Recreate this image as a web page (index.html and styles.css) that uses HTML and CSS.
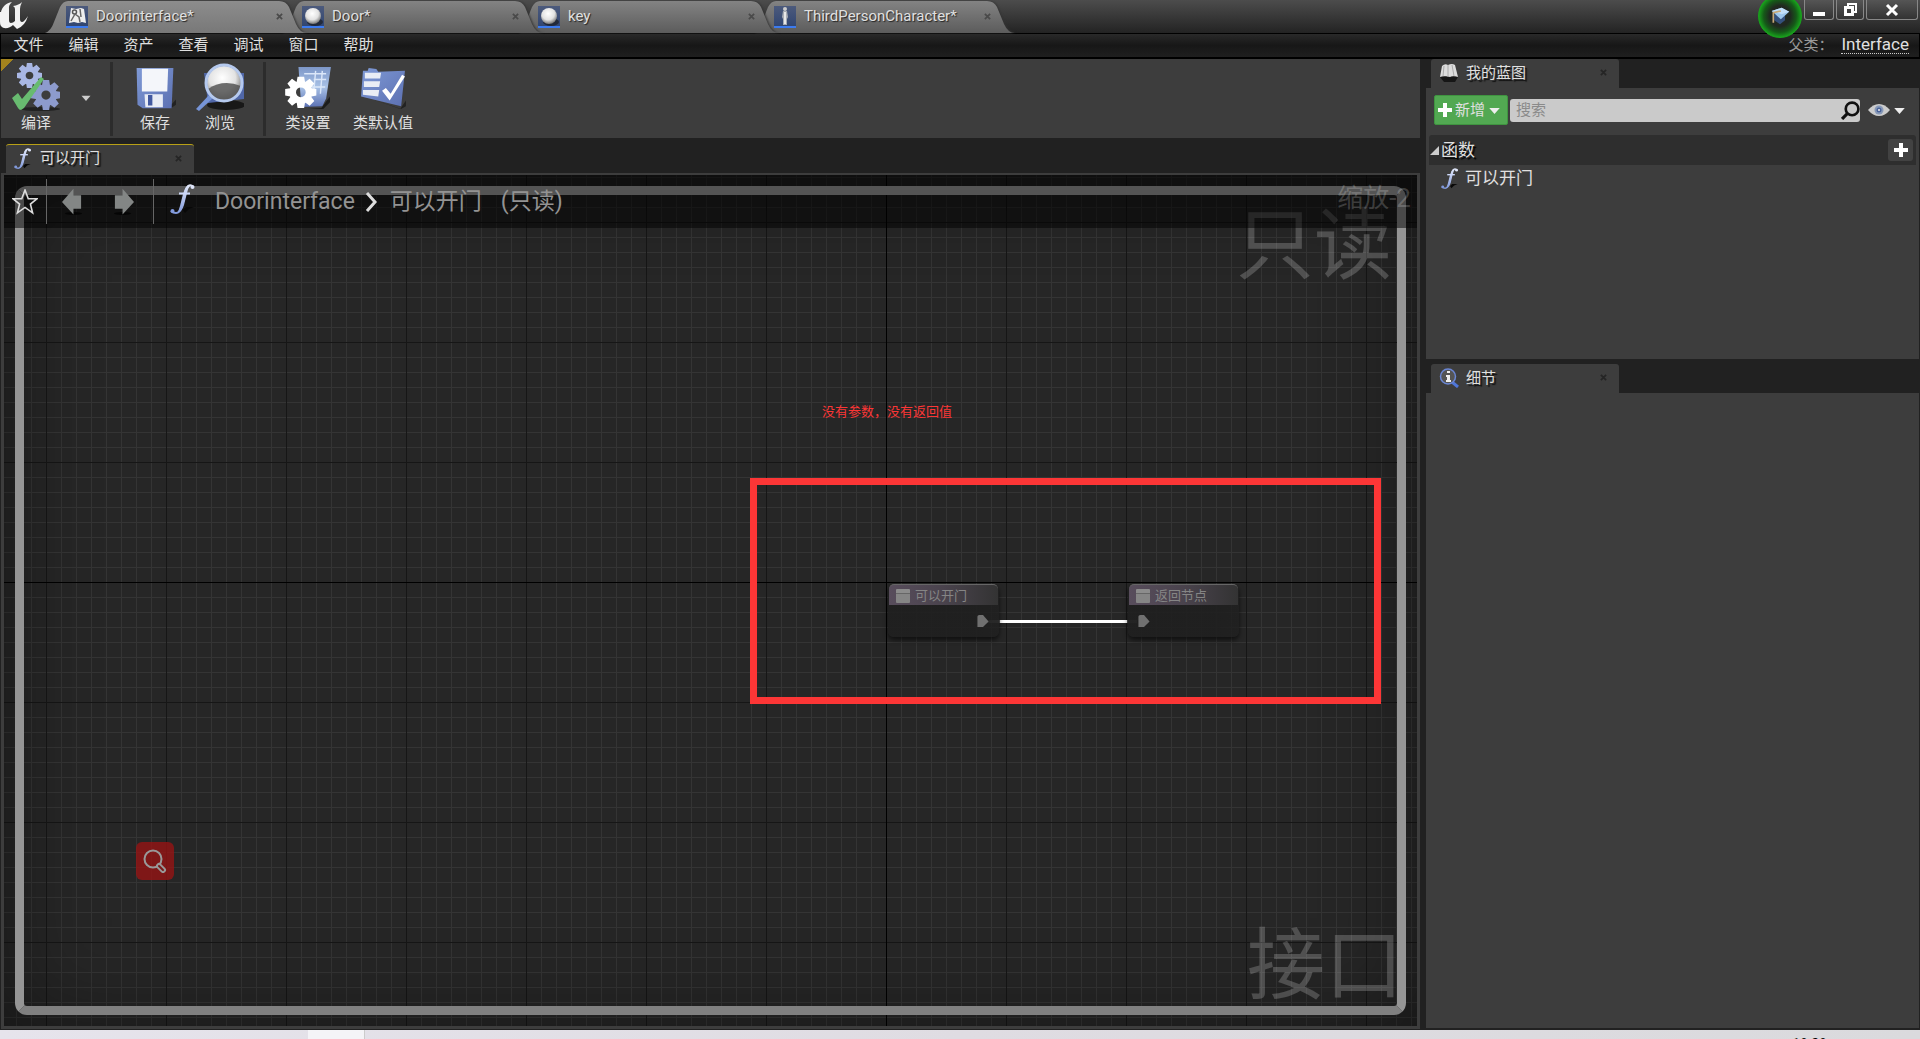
FILE: index.html
```html
<!DOCTYPE html>
<html lang="zh-CN">
<head>
<meta charset="utf-8">
<title>Doorinterface</title>
<link rel="stylesheet" href="styles.css">
</head>
<body>
<svg class="defs" aria-hidden="true">
  <defs>
    <linearGradient id="tabOn" x1="0" y1="0" x2="0" y2="1"><stop offset="0" stop-color="#8d8d8d"/><stop offset="1" stop-color="#787878"/></linearGradient>
    <linearGradient id="tabOff" x1="0" y1="0" x2="0" y2="1"><stop offset="0" stop-color="#838383"/><stop offset="1" stop-color="#5c5c5c"/></linearGradient>
    <linearGradient id="blue" x1="0" y1="0" x2="0" y2="1"><stop offset="0" stop-color="#7d97c8"/><stop offset=".5" stop-color="#a9c2e6"/><stop offset="1" stop-color="#5c72b4"/></linearGradient>
    <linearGradient id="steel" x1="0" y1="0" x2="1" y2="1"><stop offset="0" stop-color="#7f9ad6"/><stop offset="1" stop-color="#5c70b2"/></linearGradient>
    <linearGradient id="ink" gradientUnits="userSpaceOnUse" x1="0" y1="0" x2="0" y2="30"><stop offset="0" stop-color="#e4eafb"/><stop offset="1" stop-color="#7f98dc"/></linearGradient>
    <linearGradient id="tile" x1="0" y1="0" x2="0" y2="1"><stop offset="0" stop-color="#4c5a7c"/><stop offset="1" stop-color="#2f4470"/></linearGradient>
    <radialGradient id="ball" cx=".45" cy=".35" r=".65"><stop offset="0" stop-color="#fff"/><stop offset=".6" stop-color="#e2e2e2"/><stop offset="1" stop-color="#777"/></radialGradient>
    <symbol id="x" viewBox="0 0 8 8"><path d="M1 1l6 6M7 1L1 7" stroke="currentColor" stroke-width="2"/></symbol>
    <symbol id="caret" viewBox="0 0 12 8"><path d="M0 1h12L6 8z" fill="currentColor"/></symbol>
    <symbol id="gear" viewBox="-12 -12 24 24">
      <g fill="currentColor"><path id="teeth" d="M-2.500-12h5l.8 5h-6.600zM-2.500 12h5l.8-5h-6.600z"/><use href="#teeth" transform="rotate(45)"/><use href="#teeth" transform="rotate(90)"/><use href="#teeth" transform="rotate(135)"/></g>
      <circle r="6.200" fill="none" stroke="currentColor" stroke-width="5"/>
    </symbol>
    <symbol id="sphere" viewBox="0 0 22 22"><path fill="url(#tile)" d="M0 0h22v22H0z"/><ellipse cx="13" cy="16" rx="8" ry="4" fill="#161616" opacity=".6"/><circle cx="11" cy="10" r="8" fill="url(#ball)"/><path fill="#3c7bf0" d="M0 20h22v2H0z"/></symbol>
    <symbol id="arrow" viewBox="0 0 22 28"><ellipse cx="12" cy="26" rx="9" ry="1.500" fill="#050505"/><path d="M0 14L12 0v7h8v14h-8v6z" fill="#838685"/></symbol>
    <symbol id="entry" viewBox="0 0 12 14"><path d="M0 2q0-2 2-2h4l6 7-6 6H0z" fill="#707070"/></symbol>
    <symbol id="func" viewBox="0 0 26 30">
      <path d="M13 26l3-3h8l-5 2-4 4z" fill="#080808"/>
      <path d="M23 3Q21 0 18 2 16 4 15 9L12 22Q10 29 6 29 3 29 1 27" fill="none" stroke="url(#ink)" stroke-width="2"/>
      <path d="M16 3Q14 6 13 10L10 22Q9 26 7 29 12 28 14 21L17 9Q18 4 20 2 18 1 16 3z" fill="url(#ink)"/>
      <path d="M9 9.500h11" stroke="#cdd8f8" stroke-width="2"/>
      <circle cx="2.500" cy="27" r="2" fill="#8199dc"/><circle cx="22.500" cy="3" r="2" fill="#dfe6fa"/>
    </symbol>
  </defs>
</svg>

<header class="titlebar">
  <svg class="logo" viewBox="0 0 28 28" role="img" aria-label="Unreal"><path d="M1 11C2 6 6 2 12 1 9 4 9 5 9 8v11q0 3 2 3 2 0 4-2V8q0-2-2-3 6-1 9-4-2 4-2 7v10q0 3 2 3 2 0 6-6-3 10-11 13l-4-4c-3 3-9 5-12 1-1-1-1-3-1-6V9q-2-1-4 2z" fill="#f2f2f2"/></svg>
  <nav class="tabs">
    <div class="tab tab-1">
      <svg class="tab-shape" viewBox="0 0 262 32" preserveAspectRatio="none"><path d="M0 32Q6 30 9 21L15 6Q18 0 23 0H234Q241 0 244 6L251 23Q255 32 262 32z" fill="url(#tabOn)"/></svg>
      <svg class="thumb" viewBox="0 0 22 22"><path fill="url(#tile)" d="M0 0h22v22H0z"/><path fill="#eee" d="M5 2l5 1 5-1 3 1 2 14-4-1-4 1-4-1-5 1z"/><circle cx="8.500" cy="6" r="2" fill="none" stroke="#555" stroke-width="1.500"/><path d="M9 8l-4 7M9 8l4 3 1 5M14 3l1 8" fill="none" stroke="#666" stroke-width="1.500"/><path fill="#3c7bf0" d="M0 20h22v2H0z"/></svg>
      <a href="#" class="tab-name">Doorinterface*</a>
      <button class="close" aria-label="关闭"><svg><use href="#x"/></svg></button>
    </div>
    <div class="tab tab-2">
      <svg class="tab-shape" viewBox="0 0 262 32" preserveAspectRatio="none"><path d="M0 32Q6 30 9 21L15 6Q18 0 23 0H234Q241 0 244 6L251 23Q255 32 262 32z" fill="url(#tabOff)"/></svg>
      <svg class="thumb"><use href="#sphere"/></svg>
      <a href="#" class="tab-name">Door*</a>
      <button class="close" aria-label="关闭"><svg><use href="#x"/></svg></button>
    </div>
    <div class="tab tab-3">
      <svg class="tab-shape" viewBox="0 0 262 32" preserveAspectRatio="none"><path d="M0 32Q6 30 9 21L15 6Q18 0 23 0H234Q241 0 244 6L251 23Q255 32 262 32z" fill="url(#tabOff)"/></svg>
      <svg class="thumb"><use href="#sphere"/></svg>
      <a href="#" class="tab-name">key</a>
      <button class="close" aria-label="关闭"><svg><use href="#x"/></svg></button>
    </div>
    <div class="tab tab-4">
      <svg class="tab-shape" viewBox="0 0 262 32" preserveAspectRatio="none"><path d="M0 32Q6 30 9 21L15 6Q18 0 23 0H234Q241 0 244 6L251 23Q255 32 262 32z" fill="url(#tabOff)"/></svg>
      <svg class="thumb" viewBox="0 0 22 22"><path fill="url(#tile)" d="M0 0h22v22H0z"/><circle cx="11" cy="3" r="2" fill="#ccc"/><path d="M9 5h4l1 6-1 2v6H9v-6l-1-2z" fill="#a9adb5"/><path d="M11 6v12" stroke="#e8e8e8" stroke-width="2"/><path fill="#3c7bf0" d="M0 20h22v2H0z"/></svg>
      <a href="#" class="tab-name">ThirdPersonCharacter*</a>
      <button class="close" aria-label="关闭"><svg><use href="#x"/></svg></button>
    </div>
  </nav>
  <button class="tutorial" aria-label="教程"><svg viewBox="0 0 24 24"><path d="M5 10v7l7 5 6-5v-7z" fill="#34507c"/><path d="M2 6l12-4 9 5-10 9z" fill="#9cc6ec"/><path d="M2 6l12-4 9 5-9 3z" fill="#c2dff8"/><path d="M13 6L4 8v12" fill="none" stroke="#c6a878" stroke-width="2"/></svg></button>
  <div class="win-buttons">
    <button class="win" aria-label="最小化"><svg viewBox="0 0 14 14"><path d="M1 9h12v4H1z" fill="#fff"/></svg></button>
    <button class="win win-mid" aria-label="还原"><svg viewBox="0 0 14 14"><path d="M5 3V1h8v8h-2" fill="none" stroke="#fff" stroke-width="2"/><path d="M2.500 4.500h7v7h-7z" fill="none" stroke="#fff" stroke-width="3"/></svg></button>
    <button class="win win-wide" aria-label="关闭窗口"><svg viewBox="0 0 14 14"><path d="M2 2l10 10M12 2L2 12" stroke="#fff" stroke-width="3"/></svg></button>
  </div>
</header>

<div class="menubar">
  <nav class="menu">
    <button>文件</button><button>编辑</button><button>资产</button><button>查看</button><button>调试</button><button>窗口</button><button>帮助</button>
  </nav>
  <div class="parent"><span class="parent-label">父类：</span><a href="#">Interface</a></div>
</div>

<main class="workspace">
  <section class="editor">
    <div class="toolbar">
      <div class="group group-compile">
        <button class="tool">
          <svg viewBox="0 0 48 48"><ellipse cx="28" cy="46" rx="20" ry="2" fill="#222"/><g color="#a9b7e4"><use href="#gear" x="5" y="0" width="25" height="25"/></g><g color="#8d9bcd"><use href="#gear" x="19" y="17" width="30" height="30"/></g><path d="M0 35l6-5 4 6L29 14l3 2L12 45l-3 2q-2 0-3-2z" fill="#68bb70"/></svg>
          <span>编译</span>
        </button>
        <button class="drop" aria-label="编译选项"><svg><use href="#caret"/></svg></button>
      </div>
      <div class="group group-file">
        <button class="tool">
          <svg class="small" viewBox="0 0 48 48"><path d="M40 46l8-9v6l-6 4z" fill="#222"/><path d="M3 1h42l-2 46H10l-6-4z" fill="url(#steel)"/><path d="M9 2h30l-1 26H9z" fill="#f4f6fa"/><path d="M12 31h21v15H13z" fill="#e8ecf5"/><path d="M16 32h5v12h-5z" fill="#4259a0"/></svg>
          <span>保存</span>
        </button>
        <button class="tool">
          <svg viewBox="0 0 48 48"><ellipse cx="30" cy="42" rx="19" ry="5" fill="#181818"/><path d="M8 10h40v26L12 40z" fill="#5067a8"/><path d="M0 46l3 2 14-13-4-3z" fill="#7795d8"/><circle cx="28" cy="20" r="17" fill="url(#ball)"/><path d="M12 26q15-10 33-3-3 14-17 14-12 0-16-11z" fill="#555" opacity=".85"/><circle cx="28" cy="20" r="18" fill="none" stroke="#b5c9ee" stroke-width="3"/></svg>
          <span>浏览</span>
        </button>
      </div>
      <div class="group group-class">
        <button class="tool">
          <svg class="small" viewBox="0 0 48 44"><path d="M24 44l14-1 9-12v6l-7 7z" fill="#1c1c1c"/><path d="M14 0h34l-5 33-4 8-22 1z" fill="url(#blue)"/><path d="M20 7h23M30 13h13M28 21h14M32 4l-2 22M39 4l-2 24" stroke="#dbe7f9" stroke-width="1.500"/><g color="#fff"><use href="#gear" x="0" y="10" width="33" height="33"/></g></svg>
          <span>类设置</span>
        </button>
        <button class="tool">
          <svg class="small" viewBox="0 0 48 44"><path d="M8 32l34 12 6-9v6l-5 3z" fill="#222"/><path d="M3 4h5l1-3 8 1 2 3 28-1-4 37L1 31z" fill="url(#steel)"/><path d="M5 6h17l-1 6H5zM4 15h17l-1 6H4zM3 24h17l-1 7-16-2z" fill="#e9edf5"/><path d="M23 25l4-3 5 6L44 8l3 2-16 25z" fill="#fff"/></svg>
          <span>类默认值</span>
        </button>
      </div>
    </div>
    <div class="doc-tabs">
      <div class="panel-tab doc-tab">
        <svg class="fn"><use href="#func"/></svg>
        <span class="tab-title">可以开门</span>
        <button class="close" aria-label="关闭"><svg><use href="#x"/></svg></button>
      </div>
    </div>
    <div class="graph">
      <div class="axis-x"></div><div class="axis-y"></div>
      <div class="vignette"></div>
      <div class="frame"></div>
      <div class="mark mark-top">只读</div>
      <div class="mark mark-bottom">接口</div>
      <div class="crumbs">
        <button class="star" aria-label="收藏"><svg viewBox="0 0 24 24"><path d="M12 1l3 8h8l-6 5 2 8-7-5-7 5 2-8-6-5h8z" fill="none" stroke="#ddd" stroke-width="1.500"/></svg></button>
        <div class="history">
          <button aria-label="后退"><svg><use href="#arrow"/></svg></button>
          <button aria-label="前进"><svg class="flip"><use href="#arrow"/></svg></button>
        </div>
        <svg class="fn fn-big"><use href="#func"/></svg>
        <a href="#" class="crumb">Doorinterface</a>
        <svg class="chevron" viewBox="0 0 12 20"><path d="M2 1l8 9-8 9" fill="none" stroke="#ddd" stroke-width="3"/></svg>
        <span class="crumb">可以开门</span>
        <span class="crumb readonly">(只读)</span>
        <span class="zoom">缩放-2</span>
      </div>
      <p class="note">没有参数，没有返回值</p>
      <div class="callout"></div>
      <div class="wire"></div>
      <div class="node node-entry">
        <div class="node-head"><i class="node-icon"></i>可以开门</div>
        <div class="node-body"><svg><use href="#entry"/></svg></div>
      </div>
      <div class="node node-return">
        <div class="node-head"><i class="node-icon"></i>返回节点</div>
        <div class="node-body"><svg><use href="#entry"/></svg></div>
      </div>
      <button class="finder" aria-label="搜索"><svg viewBox="0 0 24 24"><circle cx="10" cy="10" r="8.500" fill="none" stroke="#999" stroke-width="2"/><path d="M16 17l4 4" stroke="#999" stroke-width="6" stroke-linecap="round"/><path d="M16 17l4 4" stroke="#7a1818" stroke-width="2" stroke-linecap="round"/></svg></button>
    </div>
  </section>

  <aside class="side">
    <section class="blueprint">
      <div class="panel-tab">
        <svg class="tab-icon" viewBox="0 0 20 20"><path d="M1 14h18l-3 5H5z" fill="#161616"/><path d="M3 3q3-3 6-1 4-2 7 0l3 12q-5-2-8 0-5-2-10 0z" fill="#ddd"/><path d="M9 2v12M5 3L4 13M13 2l2 11" stroke="#aaa"/></svg>
        <span class="tab-title">我的蓝图</span>
        <button class="close" aria-label="关闭"><svg><use href="#x"/></svg></button>
      </div>
      <div class="panel">
        <div class="search-row">
          <button class="add"><svg class="plus" viewBox="0 0 14 14"><path d="M7 0v14M0 7h14" stroke="#fff" stroke-width="4"/></svg>新增<svg class="caret"><use href="#caret"/></svg></button>
          <label class="search"><input type="text" placeholder="搜索" aria-label="搜索"><svg viewBox="0 0 18 18"><circle cx="10.500" cy="7.500" r="6" fill="none" stroke="#111" stroke-width="2.500"/><path d="M6 12l-5 5" stroke="#111" stroke-width="3"/></svg></label>
          <button class="eye" aria-label="视图选项"><svg class="eye-icon" viewBox="0 0 22 14"><path d="M0 7Q5 1 11 1t11 6q-5 6-11 6T0 7z" fill="#ccc"/><circle cx="11" cy="7" r="4.500" fill="#8799b8"/><circle cx="11" cy="7" r="2.500" fill="#4a639a"/><circle cx="11" cy="7" r="1" fill="#eee"/></svg><svg class="caret"><use href="#caret"/></svg></button>
        </div>
        <div class="section-head">
          <svg class="twist" viewBox="0 0 9 9"><path d="M9 0v9H0z" fill="#ccc"/></svg>
          <h2>函数</h2>
          <button class="add-fn" aria-label="添加函数"><svg class="plus" viewBox="0 0 14 14"><path d="M7 0v14M0 7h14" stroke="#fff" stroke-width="4"/></svg></button>
        </div>
        <a href="#" class="fn-row"><svg class="fn"><use href="#func"/></svg>可以开门</a>
      </div>
    </section>
    <section class="details">
      <div class="panel-tab">
        <svg class="tab-icon" viewBox="0 0 20 20"><path d="M13 14l6 5" stroke="#4f76d8" stroke-width="3"/><circle cx="9" cy="8.500" r="7.500" fill="#555" stroke="#6a86d4" stroke-width="1.500"/><path d="M8 3h3v2H8zM7 7h4v5h1v2H7v-2h1V9H7z" fill="#eee"/></svg>
        <span class="tab-title">细节</span>
        <button class="close" aria-label="关闭"><svg><use href="#x"/></svg></button>
      </div>
      <div class="panel"></div>
    </section>
  </aside>
</main>

<footer class="taskbar"><span class="task"></span><span class="clock">18:28</span></footer>
</body>
</html>
```

FILE: styles.css
```css
* { box-sizing: border-box; }
body {
  margin: 0;
  height: 100vh;
  display: flex;
  flex-direction: column;
  overflow: hidden;
  background: #212121;
  color: #e0e0e0;
  font: 15px/20px Roboto, "Noto Sans CJK SC", sans-serif;
}
button { margin: 0; padding: 0; border: 0; background: none; color: inherit; font: inherit; }
a { color: inherit; text-decoration: none; }
svg { display: block; flex: none; }
.defs { position: absolute; width: 0; height: 0; }

.titlebar {
  position: relative;
  flex: none;
  display: flex;
  height: 33px;
  padding-right: 2px;
  background: linear-gradient(#4c4c4c, #3c3c3c 40%, #232323);
}
.logo { width: 28px; height: 28px; margin: 1px 17px 0 0; }
.tabs { display: flex; flex: 1; padding-top: 1px; }
.tab {
  position: relative;
  display: flex;
  align-items: center;
  width: 262px;
  height: 32px;
  margin-right: -26px;
  padding: 0 21px 2px;
  text-shadow: 1px 1px 1px #222;
}
.tab-1 { z-index: 4; }
.tab-2 { z-index: 3; }
.tab-3 { z-index: 2; }
.tab-4 { z-index: 1; }
.tab-shape { position: absolute; inset: 0; width: 100%; height: 100%; z-index: -1; filter: drop-shadow(1px 0 1px #333); }
.thumb { width: 22px; height: 22px; margin: 1px 8px 0 0; }
.tab-name { flex: 1; }
.close { width: 14px; height: 14px; display: grid; place-items: center; color: #4a4a4a; }
.close svg { width: 7px; height: 7px; }

.tutorial {
  position: absolute;
  z-index: 5;
  top: -6px;
  right: 118px;
  width: 44px;
  height: 44px;
  display: grid;
  place-items: center;
  border: 1px solid #18a31c;
  border-radius: 50%;
  background: radial-gradient(#202820 35%, #155a18 55%, #18a31c 72%);
}
.tutorial svg { width: 22px; height: 20px; }
.win-buttons { display: flex; gap: 2px; height: 20px; }
.win {
  width: 30px;
  display: grid;
  place-items: center;
  border: 1px solid #888;
  border-top: 0;
  border-radius: 0 0 3px 3px;
  background: linear-gradient(#555, #333);
}
.win-mid { width: 28px; }
.win-wide { width: 52px; }
.win svg { width: 14px; height: 14px; }

.menubar {
  flex: none;
  display: flex;
  justify-content: space-between;
  align-items: center;
  height: 26px;
  padding: 0 10px 2px 0;
  border: 1px solid #000;
  border-bottom-width: 2px;
  background: linear-gradient(#292929, #171717 50%, #1f1f1f);
}
.menu { display: flex; }
.menu button { width: 55px; }
.parent { display: flex; gap: 8px; align-items: center; }
.parent-label { color: #999; }
.parent a { font-size: 17px; border-bottom: 1px dotted #ccc; line-height: 18px; }

.workspace { flex: 1; display: flex; gap: 6px; min-height: 0; padding: 0 1px; }
.editor { flex: 1; display: flex; flex-direction: column; min-width: 0; }
.toolbar {
  flex: none;
  display: flex;
  height: 79px;
  padding: 3px 0 2px;
  background: linear-gradient(135deg, #a3831e 9px, transparent 9px) no-repeat, #3d3d3d;
  text-shadow: 2px 2px 1px #111;
}
.group { display: flex; padding: 1px 10px; }
.group + .group { border-left: 3px solid #2c2c2c; }
.group-compile { width: 109px; }
.group-file { gap: 15px; width: 153px; padding-left: 17px; }
.group-class { gap: 11px; }
.group-class .tool { min-width: 64px; }
.tool { display: flex; flex-direction: column; align-items: center; gap: 2px; min-width: 50px; }
.tool svg { width: 48px; height: 48px; }
.tool .small { height: 42px; margin: 4px 0 2px; }
.drop { width: 30px; color: #ccc; padding: 0 0 3px 20px; }
.drop svg { width: 10px; height: 6px; }

.doc-tabs { flex: none; height: 35px; padding: 6px 0 0 5px; }
.panel-tab {
  display: flex;
  align-items: center;
  width: 188px;
  height: 29px;
  padding: 0 9px 2px 8px;
  border-radius: 3px 3px 0 0;
  background: #3d3d3d;
  text-shadow: 2px 2px 1px #111;
}
.doc-tab { border-top: 1px solid #b8a016; }
.tab-icon { width: 20px; height: 20px; margin-right: 7px; }
.tab-title { flex: 1; }
.panel-tab .close { color: #252525; }
.fn { width: 18px; height: 21px; margin-right: 8px; }
.fn-big { width: 26px; height: 30px; margin: -6px 19px 0 16px; }

.graph {
  position: relative;
  flex: 1;
  overflow: hidden;
  margin-bottom: 1px;
  border: 3px solid #3d3d3d;
  border-top-width: 2px;
  background:
    linear-gradient(90deg, #161616 1px, transparent 1px) 42px 47px / 120px 120px,
    linear-gradient(#161616 1px, transparent 1px) 42px 47px / 120px 120px,
    linear-gradient(90deg, #343434 1px, transparent 1px) 12px 2px / 15px 15px,
    linear-gradient(#343434 1px, transparent 1px) 12px 2px / 15px 15px,
    #262626;
}
.axis-x { position: absolute; left: 0; right: 0; top: 407px; height: 1px; background: #000; }
.axis-y { position: absolute; top: 0; bottom: 0; left: 882px; width: 1px; background: #000; }
.vignette { position: absolute; inset: 0; box-shadow: inset 0 0 90px rgba(0, 0, 0, .45); }
.frame {
  position: absolute;
  inset: 11px;
  border: 9px solid;
  border-color: #a8a8a8 #959595 #808080;
  border-radius: 12px;
}
.mark { position: absolute; color: rgba(255, 255, 255, .2); font-size: 78px; line-height: 80px; }
.mark-top { top: 32px; right: 25px; }
.mark-bottom { bottom: 19px; right: 14px; }
.crumbs {
  position: absolute;
  inset: 0 0 auto;
  display: flex;
  align-items: center;
  height: 53px;
  padding: 0 6px 0 8px;
  background: rgba(0, 0, 0, .5);
  color: #939393;
  font-size: 23px;
}
.star { padding-right: 8px; }
.star svg { width: 26px; height: 26px; }
.history { display: flex; align-items: center; gap: 30px; height: 45px; padding: 0 19px 0 15px; border: solid #666; border-width: 0 1px; }
.history svg { width: 21px; height: 28px; }
.flip { transform: scaleX(-1); }
.chevron { width: 12px; height: 20px; margin: 0 13px 0 10px; }
.readonly { margin-left: 19px; }
.zoom { margin: -8px 0 0 auto; color: rgba(255, 255, 255, .2); font-size: 26px; }
.note { position: absolute; left: 818px; top: 227px; margin: 0; color: #fc3636; font-size: 13px; }
.callout { position: absolute; left: 746px; top: 303px; width: 631px; height: 226px; border: 7px solid #fc3636; }
.wire { position: absolute; left: 983px; top: 445px; width: 150px; height: 3px; background: linear-gradient(90deg, #555 13px, #fff 13px 140px, #555 140px); }
.node {
  position: absolute;
  top: 409px;
  width: 111px;
  height: 53px;
  border-radius: 6px;
  background: linear-gradient(90deg, rgba(31, 31, 31, .9) 87px, rgba(31, 31, 31, .8));
  box-shadow: 0 3px 5px rgba(0, 0, 0, .6);
  color: #858585;
  font-size: 13px;
}
.node-entry { left: 884px; }
.node-return { left: 1124px; }
.node-head {
  display: flex;
  align-items: center;
  gap: 5px;
  height: 21px;
  margin: 0 1px;
  padding: 2px 0 0 7px;
  border-top: 1px solid #666;
  border-radius: 5px 5px 0 0;
  background: linear-gradient(90deg, #584d5c, #4a434d 50%, #333);
}
.node-icon { width: 14px; height: 14px; border-radius: 1px; background: linear-gradient(#8c8c8c 4px, #666 4px 5px, #858585 5px); }
.node-body { padding: 10px 10px 0; }
.node-body svg { width: 12px; height: 13px; }
.node-entry .node-body { padding-left: 89px; }
.finder {
  position: absolute;
  left: 132px;
  bottom: 146px;
  width: 38px;
  height: 38px;
  display: grid;
  place-items: center;
  border-radius: 6px;
  background: rgba(150, 20, 20, .8);
}
.finder svg { width: 24px; height: 24px; }

.side { flex: none; display: flex; flex-direction: column; gap: 5px; width: 493px; padding-bottom: 2px; }
.side .panel-tab { margin-left: 5px; }
.blueprint { flex: none; }
.blueprint .panel { min-height: 271px; padding: 7px 3px; }
.details { flex: 1; display: flex; flex-direction: column; }
.details .panel { flex: 1; }
.panel { background: #3d3d3d; }
.search-row { display: flex; align-items: center; gap: 2px; padding: 0 11px 0 5px; }
.add {
  display: flex;
  align-items: center;
  gap: 3px;
  width: 74px;
  height: 30px;
  padding-left: 3px;
  border: 1px solid #3f9440;
  border-radius: 2px;
  background: #52a852;
}
.plus { width: 14px; height: 14px; }
.caret { width: 11px; height: 7px; color: #eee; }
.add .caret { margin-left: 1px; }
.search { flex: 1; display: flex; align-items: center; height: 23px; border-radius: 3px; background: #cacaca; }
.search input { flex: 1; height: 23px; padding: 0 6px; border: 0; background: none; font: inherit; outline: 0; }
.search input::placeholder { color: #8a8a8a; }
.search svg { width: 19px; height: 19px; }
.eye { display: flex; align-items: center; gap: 4px; padding-left: 6px; }
.eye-icon { width: 22px; height: 14px; }
.section-head {
  display: flex;
  align-items: center;
  height: 30px;
  margin-top: 10px;
  padding: 0 3px 0 1px;
  border-radius: 3px 3px 0 0;
  background: #2e2e2e;
}
.twist { width: 9px; height: 9px; margin-right: 2px; }
.section-head h2 { flex: 1; margin: 0; font-size: 17px; font-weight: 400; text-shadow: 2px 2px 1px #000; }
.add-fn { display: grid; place-items: center; width: 25px; height: 22px; border-radius: 3px; background: #424242; }
.fn-row { display: flex; align-items: center; height: 26px; padding-left: 12px; font-size: 17px; }
.fn-row .fn { margin-right: 6px; }

.taskbar {
  flex: none;
  display: flex;
  justify-content: space-between;
  height: 9px;
  overflow: hidden;
  padding: 0 93px 0 308px;
  background: linear-gradient(90deg, #e6e4ec, #dfdce2 50%, #dadadd);
}
.task { width: 57px; background: #f4f4f7; border-right: 1px solid #ccc; }
.clock { padding-top: 4px; color: #000; font-size: 14px; }
```
